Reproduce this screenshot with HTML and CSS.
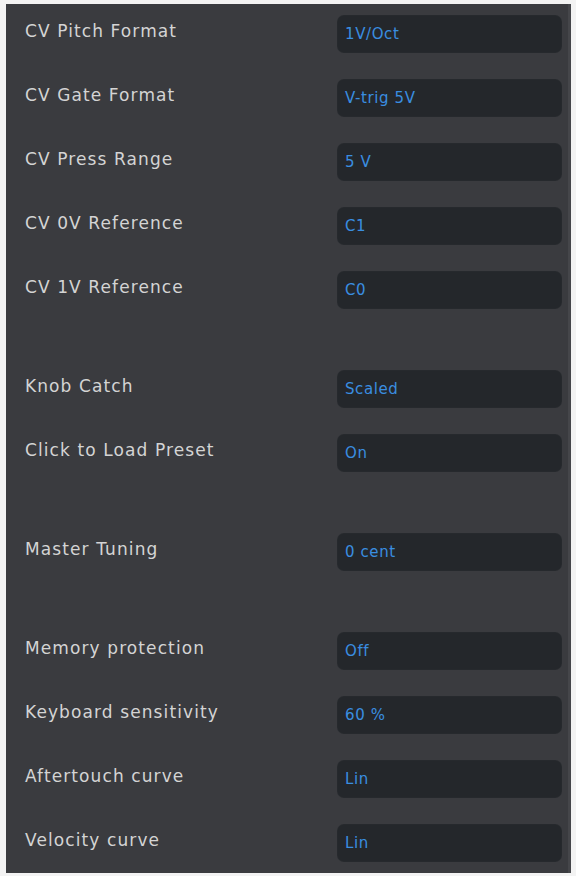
FILE: index.html
```html
<!DOCTYPE html>
<html>
<head>
<meta charset="utf-8">
<link rel="stylesheet" href="styles.css">
</head>
<body>
<div class="panel">
  <div class="section">
    <div class="row"><span class="label">CV Pitch Format</span><span class="value">1V/Oct</span></div>
    <div class="row"><span class="label">CV Gate Format</span><span class="value">V-trig 5V</span></div>
    <div class="row"><span class="label">CV Press Range</span><span class="value">5 V</span></div>
    <div class="row"><span class="label">CV 0V Reference</span><span class="value">C1</span></div>
    <div class="row"><span class="label">CV 1V Reference</span><span class="value">C0</span></div>
  </div>
  <div class="section">
    <div class="row"><span class="label">Knob Catch</span><span class="value">Scaled</span></div>
    <div class="row"><span class="label">Click to Load Preset</span><span class="value">On</span></div>
  </div>
  <div class="section">
    <div class="row"><span class="label">Master Tuning</span><span class="value">0 cent</span></div>
  </div>
  <div class="section">
    <div class="row"><span class="label">Memory protection</span><span class="value">Off</span></div>
    <div class="row"><span class="label">Keyboard sensitivity</span><span class="value">60 %</span></div>
    <div class="row"><span class="label">Aftertouch curve</span><span class="value">Lin</span></div>
    <div class="row"><span class="label">Velocity curve</span><span class="value">Lin</span></div>
  </div>
</div>
</body>
</html>
```
FILE: styles.css
```css
html, body {
  margin: 0;
  padding: 0;
  background: #f3f3f3;
}
body {
  padding: 4px 5px 3px 6px;
  height: 876px;
  box-sizing: border-box;
}
.panel {
  height: 869px;
  box-sizing: border-box;
  background: #3a3b3f;
  border-right: 3px solid #45464a;
  padding: 11px 6px 0 19px;
  display: flex;
  flex-direction: column;
  gap: 61px;
  font-family: "DejaVu Sans", Verdana, sans-serif;
}
.section {
  display: flex;
  flex-direction: column;
  gap: 26px;
}
.row {
  display: grid;
  grid-template-columns: 1fr 225px;
  align-items: center;
  height: 38px;
}
.label {
  color: #d4d4d4;
  font-size: 17px;
  letter-spacing: 1.1px;
  padding-bottom: 6px;
}
.value {
  height: 38px;
  box-sizing: border-box;
  border-radius: 7px;
  background: #24272b;
  box-shadow: inset 0 0 2px rgba(255,255,255,0.05);
  color: #3a8ee0;
  font-size: 15px;
  padding: 10px 0 0 8px;
  letter-spacing: 0.6px;
}
```
